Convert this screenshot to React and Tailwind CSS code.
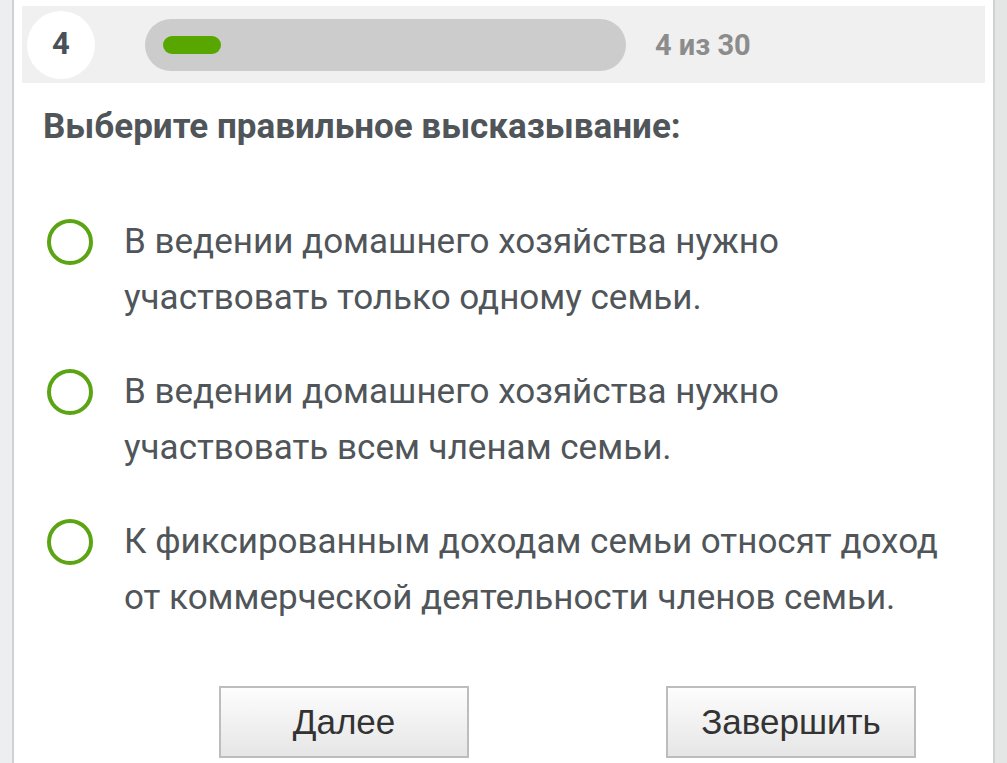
import React from 'react'

const options = [
  ['В ведении домашнего хозяйства нужно', 'участвовать только одному семьи.'],
  ['В ведении домашнего хозяйства нужно', 'участвовать всем членам семьи.'],
  ['К фиксированным доходам семьи относят доход', 'от коммерческой деятельности членов семьи.'],
]

function Option({ lines }) {
  return (
    <div className="flex items-start">
      <div className="w-[47px] shrink-0 h-[56px] flex items-center ml-[33px]">
        <div className="w-[46px] h-[46px] rounded-full border-[4px] border-[#5ba414]"></div>
      </div>
      <div className="ml-[30px] text-[35px] leading-[56px] text-[#4f5559]">
        {lines.map((l, i) => (
          <div key={i}>{l}</div>
        ))}
      </div>
    </div>
  )
}

export default function App() {
  return (
    <div className="flex h-[763px] overflow-hidden bg-white" style={{ fontFamily: 'Roboto, "Noto Sans", sans-serif' }}>
      <div className="w-[14px] shrink-0 bg-[#eceeef] border-r-2 border-[#cfd1d2]"></div>

      <div className="flex-1 px-[8px]">
        {/* header */}
        <div className="mt-[6px] h-[77px] bg-[#f0f0f0] flex items-center pl-[5px]">
          <div className="w-[68px] h-[68px] rounded-full bg-white flex items-center justify-center text-[31px] font-bold text-[#4a5057]">4</div>
          <div className="ml-[50px] w-[481px] h-[52px] rounded-full bg-[#cccccc] flex items-center px-[18px]">
            <div className="w-[58px] h-[18px] rounded-full bg-[#58a700]"></div>
          </div>
          <div className="ml-[29px] pt-[3px] text-[29px] font-bold text-[#8c8c8c]">4 из 30</div>
        </div>

        <div className="mt-[24px] pl-[21px] text-[35px] leading-[40px] font-bold text-[#4f5559]">
          Выберите правильное высказывание:
        </div>

        <div className="mt-[67px] flex flex-col gap-[38px] -ml-[8px]">
          {options.map((o, i) => (
            <Option key={i} lines={o} />
          ))}
        </div>

        <div className="mt-[60px] flex gap-[197px] pl-[197px]" style={{ fontFamily: '"Liberation Sans", Arial, sans-serif' }}>
          <button className="w-[250px] h-[72px] border-2 border-[#bdbdbd] bg-gradient-to-b from-[#fdfdfd] to-[#e6e6e6] text-[35px] text-[#333]">Далее</button>
          <button className="w-[250px] h-[72px] border-2 border-[#bdbdbd] bg-gradient-to-b from-[#fdfdfd] to-[#e6e6e6] text-[35px] text-[#333]">Завершить</button>
        </div>
      </div>

      <div className="w-[14px] shrink-0 bg-[#e4e6e6] border-l-2 border-[#cfd1d2]"></div>
    </div>
  )
}
